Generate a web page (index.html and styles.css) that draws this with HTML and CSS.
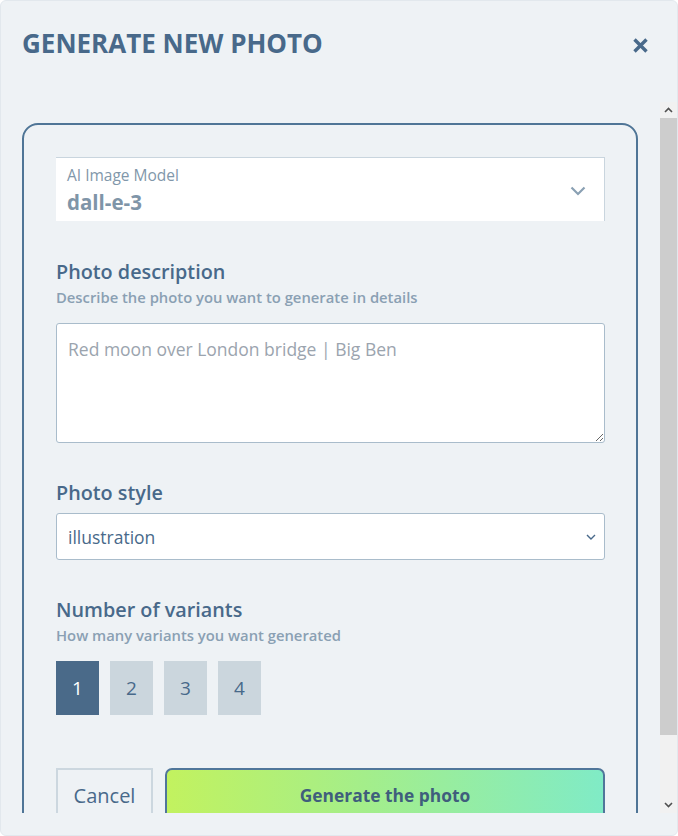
FILE: index.html
```html
<!DOCTYPE html>
<html lang="en">
<head>
<meta charset="utf-8">
<title>Generate new photo</title>
<link rel="stylesheet" href="styles.css">
</head>
<body>
<div class="modal">
  <header class="modal-header">
    <h1 class="modal-title">GENERATE NEW PHOTO</h1>
    <button class="close-btn" aria-label="Close">
      <svg width="17" height="17" viewBox="0 0 17 17"><path d="M2.5 2.5 L14.5 14.5 M14.5 2.5 L2.5 14.5" stroke="#48698a" stroke-width="3.4" stroke-linecap="butt" fill="none"/></svg>
    </button>
  </header>
  <div class="modal-body">
    <div class="scroll-content">
      <div class="card">
        <div class="model-select">
          <div class="model-text">
            <span class="model-label">AI Image Model</span>
            <span class="model-value">dall-e-3</span>
          </div>
          <svg class="model-chevron" width="16" height="10" viewBox="0 0 16 10"><path d="M1.5 1.5 L8 8 L14.5 1.5" stroke="#8aa0b3" stroke-width="2.2" fill="none"/></svg>
        </div>

        <section class="field field-desc">
          <h2 class="field-title">Photo description</h2>
          <p class="field-hint">Describe the photo you want to generate in details</p>
          <textarea class="desc-input" placeholder="Red moon over London bridge | Big Ben"></textarea>
        </section>

        <section class="field field-style">
          <h2 class="field-title">Photo style</h2>
          <div class="style-select">
            <span>illustration</span>
            <svg width="10" height="6" viewBox="0 0 10 6"><path d="M1 1 L5 5 L9 1" stroke="#48698a" stroke-width="1.4" fill="none"/></svg>
          </div>
        </section>

        <section class="field field-variants">
          <h2 class="field-title">Number of variants</h2>
          <p class="field-hint">How many variants you want generated</p>
          <div class="variants">
            <button class="variant active">1</button>
            <button class="variant">2</button>
            <button class="variant">3</button>
            <button class="variant">4</button>
          </div>
        </section>

        <div class="actions">
          <button class="btn-cancel">Cancel</button>
          <button class="btn-generate">Generate the photo</button>
        </div>
      </div>
    </div>
    <div class="scrollbar">
      <div class="sb-btn"><svg width="9" height="6" viewBox="0 0 9 6"><path d="M1 5 L4.5 1.5 L8 5" stroke="#505050" stroke-width="1.6" fill="none"/></svg></div>
      <div class="sb-thumb"></div>
      <div class="sb-space"></div>
      <div class="sb-btn"><svg width="9" height="6" viewBox="0 0 9 6"><path d="M1 1 L4.5 4.5 L8 1" stroke="#505050" stroke-width="1.6" fill="none"/></svg></div>
    </div>
  </div>
</div>
</body>
</html>
```
FILE: styles.css
```css
* { box-sizing: border-box; }
html, body { margin: 0; padding: 0; background: #ffffff; }
body { width: 678px; height: 836px; overflow: hidden; font-family: "Open Sans", "Noto Sans", sans-serif; }

.modal {
  width: 678px;
  height: 836px;
  background: #eef2f5;
  border: 1px solid #e2e8ed;
  border-radius: 6px;
  display: flex;
  flex-direction: column;
  overflow: hidden;
}

.modal-header {
  height: 101px;
  flex: none;
  display: flex;
  align-items: flex-start;
  justify-content: space-between;
  padding: 26px 28px 0 21px;
}
.modal-title {
  margin: 0;
  font-size: 26px;
  line-height: 32px;
  font-weight: 700;
  color: #48698a;
  letter-spacing: 0;
}
.close-btn {
  border: 0;
  background: none;
  padding: 0;
  margin-top: 10px;
  width: 17px;
  height: 17px;
  display: flex;
}

.modal-body {
  height: 711px;
  flex: none;
  display: flex;
}
.scroll-content {
  flex: 1;
  overflow: hidden;
  padding: 21px 22px 0 21px;
}

.card {
  width: 616px;
  border: 2px solid #4f7596;
  border-radius: 16px;
  padding: 32px 31px 40px 32px;
}

.model-select {
  height: 64px;
  background: #ffffff;
  border-top: 1px solid #c9d5de;
  border-right: 1px solid #c9d5de;
  display: flex;
  align-items: flex-start;
  justify-content: space-between;
  padding: 7px 18px 0 11px;
}
.model-text { display: flex; flex-direction: column; }
.model-label { font-size: 15.5px; line-height: 20px; color: #8197aa; }
.model-value { font-size: 20.5px; line-height: 28px; font-weight: 700; color: #7f95a8; margin-top: 3px; }
.model-chevron { margin-top: 21px; }

.field-title {
  margin: 0;
  font-size: 19.8px;
  line-height: 26px;
  font-weight: 600;
  color: #48698a;
}
.field-hint {
  margin: 2px 0 0;
  font-size: 14.8px;
  line-height: 20px;
  font-weight: 600;
  color: #8aa0b3;
}

.field-desc { margin-top: 38px; }
.desc-input {
  display: block;
  width: 100%;
  height: 120px;
  margin-top: 16px;
  border: 1px solid #a9bccb;
  border-radius: 3px;
  background: #ffffff;
  padding: 13px 11px;
  font-family: inherit;
  font-size: 17.5px;
  line-height: 24px;
  color: #48698a;
  resize: vertical;
  outline: none;
}
.desc-input::placeholder { color: #9ba4ae; font-weight: 400; }

.field-style { margin-top: 37px; }
.style-select {
  margin-top: 7px;
  height: 47px;
  background: #ffffff;
  border: 1px solid #a9bccb;
  border-radius: 3px;
  display: flex;
  align-items: center;
  justify-content: space-between;
  padding: 0 8px 0 11px;
  font-size: 17.5px;
  color: #48698a;
}

.field-variants { margin-top: 37px; }
.variants {
  display: flex;
  gap: 11px;
  margin-top: 16px;
}
.variant {
  width: 43px;
  height: 54px;
  border: 0;
  padding: 0;
  background: #cbd6dd;
  color: #48698a;
  font-family: inherit;
  font-size: 19px;
}
.variant.active { background: #4a6a89; color: #ffffff; }

.actions {
  display: flex;
  gap: 12px;
  margin-top: 53px;
}
.btn-cancel {
  width: 97px;
  height: 54px;
  background: transparent;
  border: 2px solid #ccd7df;
  color: #48698a;
  font-family: inherit;
  font-size: 20px;
  padding: 0;
}
.btn-generate {
  flex: 1;
  height: 54px;
  border: 2px solid #50769a;
  border-radius: 7px;
  background: linear-gradient(90deg, #c2f25f 0%, #a4ee8a 45%, #80ebc6 100%);
  color: #3f5e7c;
  font-family: inherit;
  font-size: 17.4px;
  font-weight: 700;
  padding: 0;
}

.scrollbar {
  width: 17px;
  flex: none;
  background: #f1f1f1;
  display: flex;
  flex-direction: column;
}
.sb-btn {
  height: 16px;
  display: flex;
  align-items: center;
  justify-content: center;
  flex: none;
}
.sb-thumb {
  height: 617px;
  background: #cdcdcd;
  flex: none;
}
.sb-space { flex: 1; }
```
